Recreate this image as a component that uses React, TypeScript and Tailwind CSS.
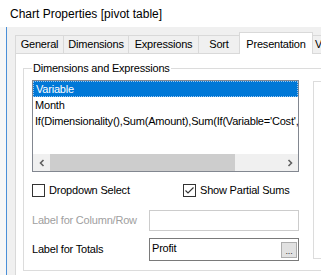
import React from 'react';

const tabs = [
  { label: 'General', w: 'w-[48px]' },
  { label: 'Dimensions', w: 'w-[65px]' },
  { label: 'Expressions', w: 'w-[70px]' },
  { label: 'Sort', w: 'w-[41px]' },
];

const items = [
  'Variable',
  'Month',
  "If(Dimensionality(),Sum(Amount),Sum(If(Variable='Cost',-1*Amount,Amount)))",
];

const Chevron: React.FC<{ dir: 'left' | 'right' }> = ({ dir }) => (
  <svg width="8" height="8" viewBox="0 0 8 8" fill="none">
    <path
      d={dir === 'left' ? 'M5.5 1 L2.5 4 L5.5 7' : 'M2.5 1 L5.5 4 L2.5 7'}
      stroke="#606060"
      strokeWidth="1.6"
    />
  </svg>
);

const App: React.FC = () => {
  return (
    <div className="w-[321px] h-[275px] overflow-hidden bg-[#f0f0f0] flex flex-col font-['Liberation_Sans',Arial,sans-serif] text-[11px] tracking-[-0.2px] text-black">
      {/* Title bar */}
      <div className="h-[27px] shrink-0 bg-white flex items-center pl-[10px] text-[12px] tracking-normal">
        Chart Properties [pivot table]
      </div>

      <div className="flex-1 flex min-h-0">
        <div className="w-[6px] bg-[#f7f7f7]" />
        <div className="w-px bg-[#4a8fd8]" />

        <div className="flex-1 flex flex-col pl-[8px] pt-[5px] min-w-0">
          {/* Tabs */}
          <div className="flex items-end h-[21px] shrink-0">
            {tabs.map(t => (
              <div
                key={t.label}
                className={`${t.w} h-[18px] shrink-0 border-t border-l border-[#d9d9d9] bg-[#f0f0f0] flex items-center justify-center whitespace-nowrap`}
              >
                {t.label}
              </div>
            ))}
            <div className="w-[74px] h-[22px] -mb-px shrink-0 relative z-10 bg-white border-t border-l border-r border-[#d9d9d9] flex items-start justify-center pt-[3px] whitespace-nowrap">
              Presentation
            </div>
            <div className="w-[60px] h-[18px] shrink-0 border-t border-[#d9d9d9] bg-[#f0f0f0] flex items-center pl-[2px] whitespace-nowrap overflow-hidden">
              Visual Cues
            </div>
          </div>

          {/* Tab panel */}
          <div className="flex-1 bg-white border-t border-l border-[#d9d9d9] pl-[7px] pt-[8px]">
            <fieldset className="w-[320px] border border-[#dcdcdc] px-[8px] pb-[9px]">
              <legend className="px-[1px] leading-[13px]">Dimensions and Expressions</legend>
              <div className="flex">
                <div className="w-[267px] shrink-0 flex flex-col">
                  {/* List box */}
                  <div className="mt-[5px] h-[92px] border border-[#828790] flex flex-col">
                    <div className="flex-1 overflow-hidden">
                      {items.map((it, i) => (
                        <div
                          key={it}
                          className={`h-[16px] flex items-center pl-[2px] whitespace-nowrap ${
                            i === 0 ? 'bg-[#0078d7] text-white border border-dotted border-[#9cc7ee]' : ''
                          }`}
                        >
                          {it}
                        </div>
                      ))}
                    </div>
                    <div className="h-[17px] flex bg-[#f0f0f0]">
                      <div className="w-[17px] flex items-center justify-center">
                        <Chevron dir="left" />
                      </div>
                      <div className="w-[185px] bg-[#cdcdcd]" />
                      <div className="flex-1" />
                      <div className="w-[17px] flex items-center justify-center">
                        <Chevron dir="right" />
                      </div>
                    </div>
                  </div>

                  {/* Checkboxes */}
                  <div className="mt-[12px] flex items-center h-[13px]">
                    <div className="w-[151px] flex items-center gap-[4px]">
                      <div className="w-[13px] h-[13px] border border-[#333333] bg-white" />
                      <span>Dropdown Select</span>
                    </div>
                    <div className="flex items-center gap-[4px]">
                      <div className="w-[13px] h-[13px] border border-[#333333] bg-white flex items-center justify-center">
                        <svg width="11" height="11" viewBox="0 0 11 11" fill="none">
                          <path d="M1.5 5.5 L4 8 L9.5 2.5" stroke="#333333" strokeWidth="1.1" />
                        </svg>
                      </div>
                      <span>Show Partial Sums</span>
                    </div>
                  </div>

                  {/* Label for Column/Row */}
                  <div className="mt-[13px] flex items-center">
                    <div className="w-[117px] text-[#a0a0a0]">Label for Column/Row</div>
                    <div className="flex-1 h-[21px] border border-[#cccccc] bg-white" />
                  </div>

                  {/* Label for Totals */}
                  <div className="mt-[7px] flex items-center">
                    <div className="w-[117px]">Label for Totals</div>
                    <div className="flex-1 h-[23px] border border-[#7a7a7a] bg-white flex justify-between pl-[2px] pr-[1px]">
                      <span className="leading-[18px]">Profit</span>
                      <div className="self-end mb-[2px] w-[16px] h-[16px] border border-[#adadad] bg-[#e1e1e1] flex items-end justify-center text-[9px] leading-[12px] text-[#333]">
                        ...
                      </div>
                    </div>
                  </div>
                </div>

                {/* Right side box */}
                <div className="ml-[14px] mt-[6px] h-[178px] flex-1 border-l border-t border-b border-[#dcdcdc]" />
              </div>
            </fieldset>
          </div>
        </div>
      </div>
    </div>
  );
};

export default App;
